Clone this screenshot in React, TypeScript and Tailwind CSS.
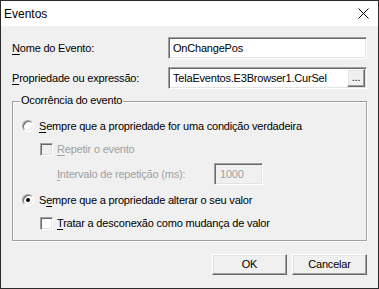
import React from 'react'

const font = { fontFamily: '"Liberation Sans", Arial, sans-serif' }

function Mn({ children }: { children: React.ReactNode }) {
  return <span className="underline underline-offset-[2px] decoration-1">{children}</span>
}

function Radio({ checked }: { checked?: boolean }) {
  return (
    <span className="relative flex h-[12px] w-[12px] shrink-0 items-center justify-center rounded-full border border-t-[#a0a0a0] border-l-[#a0a0a0] border-b-white border-r-white bg-white shadow-[inset_1px_1px_0_#696969,inset_-1px_-1px_0_#e3e3e3]">
      {checked && <span className="h-[4px] w-[4px] rounded-full bg-black" />}
    </span>
  )
}

function Check({ disabled }: { disabled?: boolean }) {
  return (
    <span
      className={`h-[13px] w-[13px] shrink-0 border border-t-[#a0a0a0] border-l-[#a0a0a0] border-b-white border-r-white shadow-[inset_1px_1px_0_#696969,inset_-1px_-1px_0_#e3e3e3] ${
        disabled ? 'bg-[#f0f0f0]' : 'bg-white'
      }`}
    />
  )
}

const sunken =
  'border border-t-[#a0a0a0] border-l-[#a0a0a0] border-b-white border-r-white shadow-[inset_1px_1px_0_#696969,inset_-1px_-1px_0_#e3e3e3]'
const raised =
  'border border-t-white border-l-white border-b-[#696969] border-r-[#696969] shadow-[inset_-1px_-1px_0_#a0a0a0,inset_1px_1px_0_#e3e3e3] bg-[#f0f0f0]'

export default function App() {
  return (
    <div
      style={font}
      className="flex h-[289px] w-[379px] flex-col border border-[#2b2b2b] bg-[#f0f0f0] text-[11px] leading-none text-black"
    >
      <div className="flex h-[25px] shrink-0 items-center justify-between bg-white pl-[3px] pr-[9px]">
        <span className="text-[12px]">Eventos</span>
        <svg width="11" height="11" viewBox="0 0 11 11" className="text-black">
          <path d="M0.5 0.5 L10.5 10.5 M10.5 0.5 L0.5 10.5" stroke="currentColor" strokeWidth="1" />
        </svg>
      </div>

      <div className="flex flex-col px-[11px] tracking-[-0.2px]">
        <div className="mt-[11px] flex h-[22px] items-center">
          <span className="w-[156px]">
            <Mn>N</Mn>ome do Evento:
          </span>
          <div className={`flex h-full flex-1 items-center bg-white pl-[4px] ${sunken}`}>OnChangePos</div>
        </div>

        <div className="mt-[8px] flex h-[22px] items-center">
          <span className="w-[156px]">
            <Mn>P</Mn>ropriedade ou expressão:
          </span>
          <div className={`flex h-full flex-1 items-center bg-white py-[1px] pl-[4px] pr-[1px] ${sunken}`}>
            <span className="flex-1">TelaEventos.E3Browser1.CurSel</span>
            <span className={`flex h-[18px] w-[18px] items-center justify-center pb-[2px] ${raised}`}>...</span>
          </div>
        </div>

        <div className="relative mt-[12px] flex h-[140px] flex-col border border-[#a0a0a0] pl-[9px] shadow-[inset_1px_1px_0_#fff,1px_1px_0_#fff]">
          <span className="absolute left-[7px] top-[-7px] bg-[#f0f0f0] px-[1px]">Ocorrência do evento</span>

          <div className="mt-[16px] flex h-[16px] items-center gap-[5px]">
            <Radio />
            <span>
              <Mn>S</Mn>empre que a propriedade for uma condição verdadeira
            </span>
          </div>

          <div className="mt-[7px] flex h-[16px] items-center gap-[4px] pl-[18px] text-[#a0a0a0]">
            <Check disabled />
            <span>
              <Mn>R</Mn>epetir o evento
            </span>
          </div>

          <div className="mt-[6px] flex h-[22px] items-center pl-[35px] text-[#a0a0a0]">
            <span className="w-[157px]">
              <Mn>I</Mn>ntervalo de repetição (ms):
            </span>
            <div className={`flex h-full w-[49px] items-center pl-[5px] ${sunken}`}>1000</div>
          </div>

          <div className="mt-[7px] flex h-[16px] items-center gap-[5px]">
            <Radio checked />
            <span>
              S<Mn>e</Mn>mpre que a propriedade alterar o seu valor
            </span>
          </div>

          <div className="mt-[7px] flex h-[16px] items-center gap-[4px] pl-[18px]">
            <Check />
            <span>
              <Mn>T</Mn>ratar a desconexão como mudança de valor
            </span>
          </div>
        </div>

        <div className="mt-[13px] flex justify-end gap-[5px]">
          <button className={`h-[21px] w-[75px] ${raised}`}>OK</button>
          <button className={`h-[21px] w-[75px] ${raised}`}>Cancelar</button>
        </div>
      </div>
    </div>
  )
}
